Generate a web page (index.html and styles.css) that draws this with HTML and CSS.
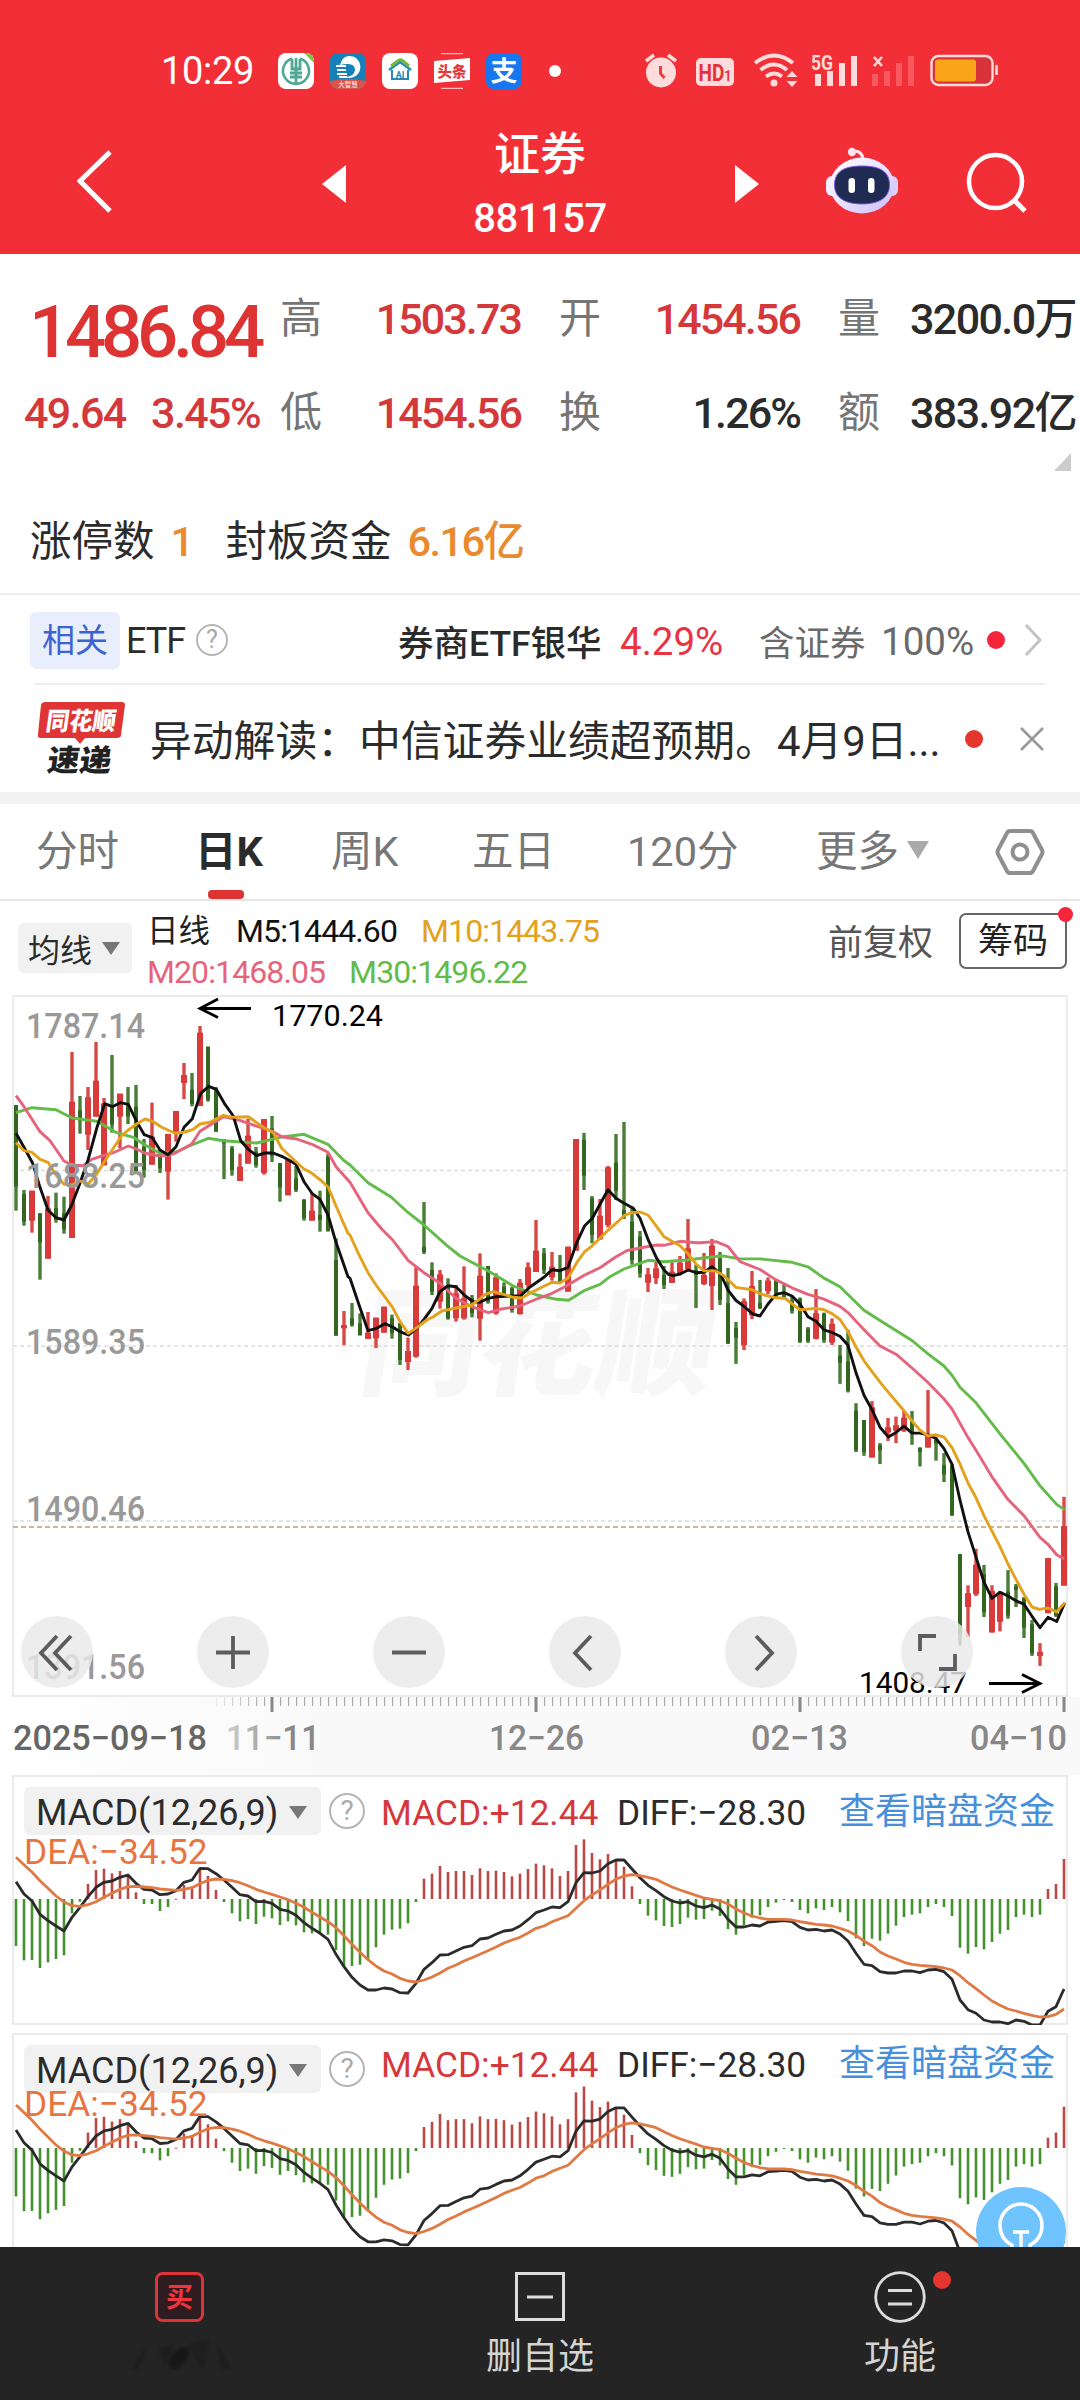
FILE: index.html
```html
<!DOCTYPE html>
<html lang="zh-CN">
<head>
<meta charset="utf-8">
<title>证券 881157</title>
<link rel="stylesheet" href="styles.css">
</head>
<body>
<div class="screen">
  <header class="header">
    <div class="status">
      <span class="time">10:29</span>
      <div class="apps">
        <svg width="36" height="36" viewBox="0 0 36 36"><rect width="36" height="36" rx="8" fill="#fff"/><path d="M26 0h2a8 8 0 0 1 8 8v2z" fill="#7cc243"/><path d="M14 5.5a13 13 0 1 0 8 0" fill="none" stroke="#4fa893" stroke-width="2.6"/><path d="M18 5v26M14 6v10h8V6M12 20h12M12 24h12M18 16v4" fill="none" stroke="#4fa893" stroke-width="2.8"/></svg>
        <svg width="36" height="36" viewBox="0 0 36 36"><rect width="36" height="36" rx="8" fill="#1581b8"/><path d="M0 28q18-4 36 0a8 8 0 0 1-8 8H8a8 8 0 0 1-8-8z" fill="#d9534a"/><path d="M18 3a11 11 0 1 1-3 21q9 0 10-7 0-6-7-6-5 0-8 1 2-8 8-9z" fill="#fff"/><path d="M6 13h10M7 17h9M7 21h10M9 24h8" stroke="#fff" stroke-width="1.8"/><text x="18" y="34" font-size="6.500" fill="#fff" text-anchor="middle">大智慧</text></svg>
        <svg width="36" height="36" viewBox="0 0 36 36"><rect width="36" height="36" rx="8" fill="#fff"/><path d="M7 17 18 9l11 8" fill="none" stroke="#2789b5" stroke-width="2.6"/><path d="M9 13 17 7q2-1 4 1l6 5" fill="none" stroke="#74b83e" stroke-width="3"/><path d="M10 17v9h16v-9" fill="none" stroke="#2789b5" stroke-width="2"/><text x="18" y="24.500" font-size="9" font-weight="700" fill="#2789b5" text-anchor="middle">AI</text></svg>
        <svg width="36" height="36" viewBox="0 0 36 36"><path d="M0 8 36 5v22L0 30z" fill="#fff"/><path d="M7 .7h22M7 35.300h22" stroke="#f9b9b9" stroke-width="1.300"/><text x="18" y="23.500" font-size="14.500" font-weight="900" fill="#e5383b" text-anchor="middle">头条</text></svg>
        <svg width="36" height="36" viewBox="0 0 36 36"><rect width="36" height="36" rx="8" fill="#1677f0"/><text x="18" y="28" font-size="27" font-weight="700" fill="#fff" text-anchor="middle">支</text></svg>
      </div>
      <i class="more-dot"></i>
      <svg class="sys" width="356" height="36" viewBox="0 0 356 36">
        <g fill="#ffdcdc">
          <circle cx="16" cy="19.500" r="15"/><path d="M1 8 9 2M31 8 23 2" stroke="#ffdcdc" stroke-width="3.500"/><path d="M15.500 13v7.500l4 4.500" fill="none" stroke="#ee3b40" stroke-width="3"/>
          <rect x="51" y="5" width="38" height="28" rx="5"/>
          <circle cx="129" cy="30" r="3.500"/>
          <path d="M147 18l5.500 6h-11zM147 34l5.500-6h-11z"/>
          <rect x="170" y="21" width="6" height="12"/><rect x="182" y="18" width="6" height="15"/><rect x="194" y="10" width="6" height="23"/><rect x="206" y="3" width="6" height="30"/>
        </g>
        <text x="70" y="27.500" font-size="23" font-weight="700" fill="#e53238" text-anchor="middle" textLength="33" lengthAdjust="spacingAndGlyphs">HD<tspan font-size="15">1</tspan></text>
        <path d="M110 10Q129-5 148 10M115.500 17Q129 6 142 17M121 23.500Q129 17.500 137 23.500" fill="none" stroke="#ffdcdc" stroke-width="4"/>
        <text x="166" y="16.500" font-size="19.500" font-weight="700" fill="#ffdcdc" textLength="22" lengthAdjust="spacingAndGlyphs">5G</text>
        <path d="M229 4l8 9M237 4l-8 9" stroke="#ffdcdc" stroke-width="2.600"/>
        <g fill="#f7595f"><rect x="227" y="21" width="6" height="12"/><rect x="239" y="18" width="6" height="15"/><rect x="251" y="10" width="6" height="23"/><rect x="263" y="3" width="6" height="30"/></g>
        <rect x="286.500" y="3" width="61" height="29" rx="7" fill="#d8323a" stroke="#ffdcdc" stroke-width="2.400"/><rect x="290" y="6.500" width="41" height="22" rx="3" fill="#faa41a"/><path d="M351.500 12v10" stroke="#ffdcdc" stroke-width="2.600"/>
      </svg>
    </div>
    <nav class="titlebar">
      <svg class="back" width="36" height="66" viewBox="0 0 36 66"><path d="M33 3 3 32l30 30" fill="none" stroke="#fff" stroke-width="5"/></svg>
      <svg width="24" height="38" viewBox="0 0 24 38"><path d="M24 0v38L0 19z" fill="#fff"/></svg>
      <h1 class="title">证券<small>881157</small></h1>
      <svg width="24" height="38" viewBox="0 0 24 38"><path d="M0 0v38l24-19z" fill="#fff"/></svg>
      <svg class="robot" width="74" height="68" viewBox="0 0 74 68">
        <defs><linearGradient id="shell" x1="0" y1="0" x2="1" y2="1"><stop offset="0" stop-color="#fff"/><stop offset=".5" stop-color="#e9e3ff"/><stop offset="1" stop-color="#c9bdfb"/></linearGradient></defs>
        <rect x="1" y="29" width="12" height="20" rx="6" fill="#f1eeff"/><rect x="61" y="29" width="12" height="20" rx="6" fill="#d8cffc"/>
        <path d="M27 4q10-1 11 8" fill="none" stroke="#ffe9ee" stroke-width="3"/><circle cx="27" cy="5" r="4.200" fill="#ffe3ea"/>
        <ellipse cx="37" cy="38.500" rx="32" ry="28" fill="url(#shell)"/>
        <path d="M37 19c20 0 27.500 7 27.500 19S55 57 37 57 9.500 50 9.500 38 17 19 37 19z" fill="#1f2b52" stroke="#7d5ae0" stroke-width="1"/>
        <rect x="23.500" y="31" width="6.500" height="15" rx="3.200" fill="#fff"/><rect x="43" y="31" width="6.500" height="15" rx="3.200" fill="#fff"/>
      </svg>
      <svg class="search" width="62" height="62" viewBox="0 0 62 62"><circle cx="29.500" cy="29.500" r="26.500" fill="none" stroke="#fff" stroke-width="4.500"/><path d="M47 47l12 12" stroke="#fff" stroke-width="5"/></svg>
    </nav>
  </header>

  <section class="quote">
    <div class="figures">
      <strong class="price">1486.84</strong>
      <span class="change"><b>49.64</b><b>3.45%</b></span>
      <span class="k">高</span><span class="v up">1503.73</span>
      <span class="k">开</span><span class="v up">1454.56</span>
      <span class="k">量</span><span class="v wide">3200.0万</span>
      <span class="k">低</span><span class="v up">1454.56</span>
      <span class="k">换</span><span class="v">1.26%</span>
      <span class="k">额</span><span class="v wide">383.92亿</span>
    </div>
    <i class="corner"></i>
    <p class="limits"><span>涨停数</span><em>1</em><span>封板资金</span><em>6.16亿</em></p>
  </section>

  <section class="etf">
    <span class="badge">相关</span><span class="etf-label">ETF</span>
    <span class="help">?</span>
    <span class="etf-name">券商ETF银华</span><span class="etf-pct">4.29%</span>
    <span class="etf-has">含证券</span><span class="etf-full">100%</span><i class="dot"></i>
    <svg width="22" height="34" viewBox="0 0 22 34"><path d="M3 2l14 15L3 32" fill="none" stroke="#c4c4c4" stroke-width="3"/></svg>
  </section>

  <section class="news">
    <svg width="90" height="76" viewBox="0 0 90 76"><path d="M8 1h77q3 0 3 3l-4 30q0 3-4 3H48l-5 6-5-6H4q-4 0-3-4L4 4q1-3 4-3z" fill="#e03535"/><g font-weight="900" transform="skewX(-8)"><text x="12" y="29" font-size="25" fill="#fff" textLength="70" lengthAdjust="spacingAndGlyphs">同花顺</text><text x="19" y="70" font-size="30" fill="#222" textLength="64" lengthAdjust="spacingAndGlyphs">速递</text></g></svg>
    <p>异动解读：中信证券业绩超预期。4月9日...</p>
    <i class="dot"></i>
    <svg width="26" height="26" viewBox="0 0 26 26"><path d="M2 2l22 22M24 2 2 24" stroke="#999" stroke-width="2.600"/></svg>
  </section>

  <nav class="tabs">
    <span>分时</span><span class="active">日K</span><span>周K</span><span>五日</span><span>120分</span><span class="caret">更多</span>
    <svg width="50" height="48" viewBox="0 0 50 48"><path d="M15 3h20q2 0 3 2l9 17q1 2 0 4l-9 17q-1 2-3 2H15q-2 0-3-2L3 26q-1-2 0-4l9-17q1-2 3-2z" fill="none" stroke="#8f8f8f" stroke-width="4"/><circle cx="25" cy="24" r="7.500" fill="none" stroke="#8f8f8f" stroke-width="4"/></svg>
  </nav>

  <section class="legend">
    <span class="ma-pick">均线<i></i></span>
    <p class="ma"><b>日线</b><span>M5:1444.60</span><span class="m10">M10:1443.75</span><br><span class="m20">M20:1468.05</span><span class="m30">M30:1496.22</span></p>
    <span class="adjust">前复权</span>
    <span class="chips">筹码</span>
  </section>

  <section class="kline">
    <svg id="kline" width="1080" height="780" viewBox="0 995 1080 780"></svg>
    <div class="tools">
      <span><svg width="72" height="72"><path d="M36 20 20 37l16 17M50 20 34 37l16 17"/></svg></span>
      <span><svg width="72" height="72"><path d="M36 20v33M19 36.500h34"/></svg></span>
      <span><svg width="72" height="72"><path d="M19 36.500h34"/></svg></span>
      <span><svg width="72" height="72"><path d="M42 20 26 37l16 17"/></svg></span>
      <span><svg width="72" height="72"><path d="M31 20l16 17-16 17"/></svg></span>
      <span><svg width="72" height="72"><path d="M19 35V20h16M54 38v15H38"/></svg></span>
    </div>
  </section>

  <section class="macd">
    <div class="macd-head"><span class="ind">MACD(12,26,9)<i></i></span><span class="help">?</span><span class="up">MACD:+12.44</span><span class="diff">DIFF:−28.30</span><a>查看暗盘资金</a></div>
    <p class="dea">DEA:−34.52</p>
    <svg class="plot" id="macd1" width="1080" height="250"></svg>
  </section>
  <section class="macd second">
    <div class="macd-head"><span class="ind">MACD(12,26,9)<i></i></span><span class="help">?</span><span class="up">MACD:+12.44</span><span class="diff">DIFF:−28.30</span><a>查看暗盘资金</a></div>
    <p class="dea">DEA:−34.52</p>
    <svg class="plot" id="macd2" width="1080" height="250"></svg>
    <svg class="bulb" width="90" height="90" viewBox="0 0 90 90"><circle cx="45" cy="45" r="45" fill="#6fc3ff"/><path d="M36 66v-8q-12-6-12-20a21 21 0 0 1 42 0q0 14-12 20v8M37 45h16M45 45v22" fill="none" stroke="#fff" stroke-width="3.500"/></svg>
  </section>

  <footer class="bottom">
    <div class="item"><svg width="50" height="52" viewBox="0 0 50 52"><rect x="1.500" y="2.500" width="46" height="47" rx="6" fill="#2e1c20" stroke="#dd3439" stroke-width="3"/><text x="24.500" y="35.500" font-size="27" font-weight="700" fill="#f0343c" text-anchor="middle">买</text></svg>
      <svg class="smudge" width="110" height="40" viewBox="0 0 110 40"><path d="M6 33 22 8l-8 26zM34 12l16-4-10 24zM62 8l22-4-6 30zM92 6l14 26-10 2z" fill="#1e1e1e"/><ellipse cx="54" cy="22" rx="13" ry="7" transform="rotate(-50 54 22)" fill="#171717"/></svg></div>
    <div class="item"><svg width="50" height="52" viewBox="0 0 50 52"><path d="M1.500 2.500h47v46h-47zM12 26h26" fill="none" stroke="#dcdcdc" stroke-width="3"/></svg><span>删自选</span></div>
    <div class="item"><svg width="52" height="52" viewBox="0 0 52 52"><circle cx="26" cy="26" r="24.300" fill="none" stroke="#dcdcdc" stroke-width="2.800"/><path d="M14 19.500h24M14 33h24" stroke="#dcdcdc" stroke-width="3"/></svg><span>功能</span><i class="dot"></i></div>
  </footer>
</div>
<script src="chart.js"></script>
</body>
</html>
```

FILE: styles.css
```css
* { box-sizing: border-box; margin: 0; padding: 0; }
body { background: #fff; font-family: Roboto, "Noto Sans CJK SC", sans-serif; color: #2b2b2b; }
i, em { font-style: normal; }
b { font-weight: inherit; }
.screen { width: 1080px; height: 2400px; overflow: hidden; background: #fff; }
svg { display: block; flex: none; }
.up { color: #d5383b; }
.dot { width: 18px; height: 18px; border-radius: 50%; background: #f5253b; flex: none; }

.header { height: 254px; background: #f22f37; color: #fff; padding-top: 53px; }
.status { display: flex; height: 36px; align-items: center; padding-left: 161px; }
.time { width: 117px; font-size: 38px; letter-spacing: -.3px; }
.apps { display: flex; gap: 16px; }
.more-dot { width: 12px; height: 12px; margin: 0 84px 0 27px; border-radius: 50%; background: #fff; }
.titlebar { display: grid; grid-template-columns: 245px 88px 325px 90px 141px 70px; align-items: center; height: 130px; margin-top: 28px; padding-left: 77px; }
.back { margin-top: -4px; }
.robot { margin-top: -6px; }
.search { margin-top: -2px; }
.title { width: 240px; margin-left: 10px; padding-top: 4px; text-align: center; font-size: 46px; line-height: 66px; font-weight: 500; }
.title small { display: block; font-size: 40px; line-height: 64px; letter-spacing: -.5px; font-weight: 500; }

.quote { height: 339px; padding-top: 26px; }
.figures { display: grid; grid-template-columns: 280px 42px 199px 38px 42px 199px 38px 42px 198px; grid-template-rows: 75px 111px; }
.figures > * { white-space: nowrap; }
.price { grid-area: 1 / 1; padding-left: 29px; font-size: 72.500px; line-height: 105px; font-weight: 500; letter-spacing: -5.200px; color: #de3333; }
.change { grid-area: 2 / 1; display: flex; justify-content: space-between; padding: 0 20px 0 24px; font-size: 43px; letter-spacing: -1.600px; font-weight: 500; color: #d5383b; }
.k { font-size: 42px; line-height: 78px; color: #757575; }
.v { font-size: 43px; line-height: 79px; text-align: right; letter-spacing: -1.900px; font-weight: 500; }
.k:nth-child(3) { grid-area: 1 / 2; } .k:nth-child(5) { grid-area: 1 / 5; } .k:nth-child(7) { grid-area: 1 / 8; }
.v:nth-child(4) { grid-area: 1 / 3; } .v:nth-child(6) { grid-area: 1 / 6; } .v:nth-child(8) { grid-area: 1 / 9; }
.k:nth-child(9) { grid-area: 2 / 2; } .k:nth-child(11) { grid-area: 2 / 5; } .k:nth-child(13) { grid-area: 2 / 8; }
.v:nth-child(10) { grid-area: 2 / 3; } .v:nth-child(12) { grid-area: 2 / 6; } .v:nth-child(14) { grid-area: 2 / 9; }
.figures > .change, .figures > :nth-child(n+9) { line-height: 116px; }
.figures > .wide { text-align: left; padding-left: 30px; letter-spacing: -1.600px; }
.corner { display: block; width: 17px; height: 18px; margin: -13px 0 0 1054px; background: #ccc; clip-path: polygon(100% 0, 100% 100%, 0 100%); }
.limits { display: flex; margin-top: 41px; padding-left: 30px; font-size: 41.500px; line-height: 60px; white-space: nowrap; }
.limits em { color: #ea8a2f; font-weight: 500; margin: 0 33px 0 16px; letter-spacing: -1.600px; }

.etf { display: flex; align-items: center; height: 92px; border-top: 2px solid #eee; padding-left: 30px; font-size: 36px; white-space: nowrap; position: relative; }
.etf::after { content: ""; position: absolute; left: 35px; right: 35px; bottom: 0; height: 2px; background: #eee; }
.badge { width: 90px; height: 57px; line-height: 57px; text-align: center; border-radius: 6px; background: #e8eefc; color: #3c63d2; font-size: 33px; }
.etf-label { width: 69px; padding: 2px 0 0 6px; letter-spacing: -1px; }
.help { width: 32px; height: 32px; flex: none; margin-left: 7px; border: 2.500px solid #b5b5b5; border-radius: 50%; color: #aaa; font-size: 25px; line-height: 28px; text-align: center; }
.etf-name { width: 222px; margin-left: 170px; font-weight: 500; font-size: 35.500px; }
.etf-pct { width: 139px; padding-top: 2px; color: #e93345; font-size: 38.500px; }
.etf-has { width: 122px; color: #6a6a6a; font-size: 35.500px; }
.etf-full { width: 106px; padding-top: 2px; color: #6a6a6a; font-size: 38.500px; }
.etf svg { margin-left: 18px; }

.news { display: flex; align-items: center; height: 107px; padding: 0 35px 0 37px; }
.news p { width: 815px; margin-left: 23px; padding-bottom: 2px; font-size: 41.800px; white-space: nowrap; }
.news .dot { background: #e4352f; margin-right: 36px; }

.tabs { display: grid; grid-template-columns: 159px 136px 141px 155px 189px 179px 50px; align-items: center; height: 109px; padding-left: 36px; border-top: 12px solid #f2f2f2; border-bottom: 2px solid #e6e6e6; font-size: 41.500px; color: #777; line-height: 95px; white-space: nowrap; }
.tabs .active { position: relative; color: #2b2b2b; font-weight: 700; }
.active::after { content: ""; position: absolute; left: 13px; bottom: 0; width: 36px; height: 9px; border-radius: 4px; background: #de3333; }
.caret::after { content: ""; display: inline-block; margin-left: 8px; vertical-align: 7px; border: 11px solid transparent; border-top: 18px solid #aaa; border-bottom: 0; }

.legend { display: flex; height: 94px; padding-left: 18px; white-space: nowrap; }
.ma-pick { display: flex; align-items: center; gap: 10px; width: 114px; height: 50px; margin-top: 22px; padding-left: 10px; border-radius: 6px; background: #f1f1f1; font-size: 32px; }
.ma-pick i, .ind i { border: 9px solid transparent; border-top: 13px solid #777; border-bottom: 0; }
.ma { width: 696px; padding: 10px 0 0 15px; font-size: 32px; line-height: 41px; letter-spacing: -.9px; color: #111; }
.ma b { margin-right: 26px; letter-spacing: 0; color: #222; font-size: 31.500px; }
.ma span { margin-right: 24px; }
.m10 { color: #e3a11c; } .m20 { color: #e5647c; } .m30 { color: #63bb4a; }
.adjust { width: 131px; line-height: 86px; font-size: 35px; color: #555; }
.chips { position: relative; width: 108px; height: 56px; margin-top: 12px; border: 2px solid #666; border-radius: 7px; text-align: center; font-size: 35px; line-height: 54px; color: #222; }
.chips::after { content: ""; position: absolute; right: -8px; top: -8px; width: 15px; height: 15px; border-radius: 50%; background: #f5253b; }

.kline { position: relative; height: 780px; }
.tools { position: absolute; left: 21px; top: 621px; display: flex; gap: 104px; }
.tools span { width: 72px; height: 72px; border-radius: 50%; background: rgba(233, 233, 233, .82); }
.tools path { fill: none; stroke: #5c5c5c; stroke-width: 3.800; }

.macd { position: relative; height: 251px; font-size: 35.300px; white-space: nowrap; }
.macd-head { position: relative; z-index: 1; display: flex; height: 72px; padding: 12px 0 0 24px; line-height: 52px; }
.ind { display: flex; align-items: center; justify-content: space-between; width: 297px; height: 48px; padding: 3px 14px 0 12px; border-radius: 6px; background: #f1f1f1; font-size: 36px; }
.macd .help { width: 36px; height: 36px; margin: 6px 0 0 8px; line-height: 32px; font-size: 28px; }
.macd .up { margin-left: 16px; width: 236px; }
.diff { width: 222px; }
.macd a { color: #478fdb; font-size: 36px; line-height: 50px; }
.dea { position: relative; z-index: 1; margin: -15px 0 0 24px; line-height: 40px; color: #e8743f; }
.plot { position: absolute; left: 0; top: 0; }
.second { height: 214px; margin-top: 7px; overflow: hidden; }
.second .macd-head > :not(.ind):not(.help) { margin-top: -6px; }
.second .dea { margin-top: -21px; }
.bulb { position: absolute; z-index: 2; left: 976px; top: 154px; }

.bottom { display: grid; grid-template-columns: repeat(3, 360px); height: 153px; background: #242424; color: #d4d4d4; }
.item { position: relative; display: flex; flex-direction: column; align-items: center; padding-top: 24px; font-size: 36px; line-height: 52px; }
.item span { margin-top: 8px; }
.item .dot { position: absolute; left: 213px; top: 24px; background: #e4352f; }
.smudge { margin-top: 13px; filter: blur(1.500px); }
```

FILE: chart.js
```js
// Rows are grouped in blocks; every block has its own origin and unit.
// Candle: [direction, high, body top, body bottom, low]
const candleBlocks = [
  { y: 990, k: 3, rows: `g345,345,590,662 g600,612,695,707 r602,602,692,728 g670,670,757,869 r618,655,806,806 g608,655,690,698 g620,670,718,731 r186,335,744,744 g318,362,392,431 r291,322,434,480 r156,272,380,380 r324,340,526,526 g195,345,404,428 r311,311,380,475 g291,345,380,402 g285,350,545,550 g447,470,540,563 r338,440,524,524 g480,487,535,549 r432,432,545,629 r363,363,432,455 r219,255,279,327 g249,299,342,349 r108,128,348,348 g170,170,330,335 g291,300,425,425 g447,450,460,567 g468,475,540,557 r491,530,573,573 r387,437,521,521 g471,485,525,533 r387,387,549,554 g378,415,498,516 g519,519,592,635 r510,510,616,616 g528,565,600,606 g627,630,685,692 r610,662,692,692 g602,675,690,725 g490,500,722,725 g745,810,1037,1037 r963,1005,1015,1065 g939,985,1005,1010` },
  { y: 1040, k: 3, rows: `g820,850,885,887 r816,878,897,897 r833,833,895,924 r800,800,878,878 g824,835,880,896 g850,850,960,975 r893,933,966,990 r682,737,950,953 g486,620,636,642 g667,690,755,765 r690,703,785,806 g715,735,835,839 r735,760,835,845 r679,775,835,839 g765,775,820,832 r640,707,836,902 g678,678,785,791 r700,712,820,824 g727,740,762,768 g740,745,810,818 r717,728,822,824 r667,682,735,745 r540,632,696,696 g624,640,690,702 r636,680,712,722 g645,690,725,730 r620,620,755,755 r297,297,632,632 g279,300,407,450 g468,475,585,610 r477,527,597,600 r378,382,555,562 g282,368,452,480 g246,510,530,537 g500,545,660,674 g573,590,700,713 r684,703,728,756 r665,685,715,732 g678,705,735,747 r667,695,729,729 r648,668,700,706 r537,625,688,695 g675,690,705,804 r639,705,732,735 r597,617,738,810 g636,655,780,795 g684,790,910,912` },
  { y: 1180, k: 2.904, rows: `g412,430,458,534 r344,352,480,494 r264,308,393,404 g290,357,372,375 r283,292,323,332 g287,290,328,340 g300,328,340,343 g338,350,380,388 g341,345,470,473 g427,432,468,473 r317,387,461,463 g385,388,465,473 r402,418,472,479 g479,510,530,592 g435,527,612,617 g648,670,785,790 g697,697,790,801 r642,660,806,806 g764,770,785,825 r691,718,733,758 r687,712,728,764 r670,690,728,732 g671,700,735,769 g776,778,790,832 r610,740,777,777 g748,755,765,815 g793,828,855,877 g825,830,973,976 g1086,1086,1320,1352 r1177,1200,1240,1327 r1071,1117,1203,1208 g1118,1145,1255,1269 r1177,1193,1314,1314 r1195,1200,1283,1311 g1133,1195,1265,1274 g1173,1180,1190,1240 g1211,1215,1300,1330 g1278,1290,1375,1382 r1345,1370,1382,1411 r1098,1098,1258,1258 g1170,1180,1265,1269 r920,1005,1178,1178` }
];
const origins = [[0, 990, 3], [350, 1040, 3], [700, 1180, 2.904]];
const averages = {
  '#63bb4a': [
    '48,368 96,353 168,359 216,384 290,394 350,428 400,442 435,465 480,490 530,485 575,465 625,445 670,452 770,459 840,442 912,433 984,463 1030,510',
    '0,375 54,428 122,470 175,518 222,555 290,616 330,648 415,693 490,738 560,765 620,778 656,781 704,751 750,733 780,710 822,687 894,661 942,665 1010,660 1110,648',
    '72,221 120,229 180,229 276,239 324,252 372,285 420,310 492,378 540,408 588,437 636,466 684,505 732,540 756,567 780,602 828,647 900,737 972,823 1020,888 1070,942 1094,958'],
  '#e5647c': [
    '48,317 72,350 96,388 120,425 150,452 192,513 216,525 250,527 275,508 300,500 340,488 385,468 410,477 435,490 480,498 510,495 530,487 575,462 600,424 670,380 720,391 745,400 820,425 845,440 890,447 936,463 984,487 1008,530',
    '0,427 54,518 95,567 128,600 175,662 222,698 270,730 318,775 365,800 415,818 450,808 510,798 560,777 606,760 645,740 700,707 750,683 798,650 830,632 870,624 920,615 942,616 990,604 1038,608',
    '0,182 48,179 84,193 120,237 180,260 228,290 276,313 324,332 372,346 420,367 444,385 492,435 540,482 588,506 636,546 684,588 732,636 756,665 804,748 828,785 876,862 924,928 972,975 1020,1038 1044,1058 1070,1088 1092,1101'],
  '#111': [
    '48,430 72,472 98,520 120,592 144,660 168,683 192,690 215,645 240,580 264,510 290,415 314,341 337,350 361,338 385,343 410,395 433,434 457,443 480,480 504,494 528,470 552,412 577,386 602,310 626,289 649,298 673,340 700,378 722,452 745,478 770,497 795,489 820,489 845,499 865,509 888,523 912,575 936,610 960,628 984,675 1008,757 1044,860',
    '0,715 30,803 54,872 80,865 104,851 128,861 150,875 175,885 200,865 222,838 246,805 270,755 294,737 318,740 345,767 370,785 390,787 415,775 440,770 490,768 512,767 540,741 583,711 606,689 630,692 654,682 680,608 704,557 727,535 774,449 798,475 822,490 850,505 870,535 894,598 920,655 942,690 955,703 970,707 990,702 1015,690 1038,698 1062,697 1086,680 1110,700 1125,730',
    '84,320 108,350 132,367 158,389 180,395 204,360 228,332 252,327 276,337 300,360 324,397 348,410 372,435 396,443 420,454 444,480 468,560 492,625 516,667 540,718 565,746 588,733 612,715 636,735 660,735 684,740 708,750 732,780 756,825 780,930 804,1022 828,1095 852,1168 876,1215 900,1197 924,1208 948,1222 972,1232 996,1267 1020,1300 1044,1270 1070,1282 1094,1228'],
  '#e3a11c': [
    '48,458 72,482 96,487 120,508 144,517 168,555 192,583 216,585 240,573 265,582 290,552 315,512 340,475 365,437 385,420 410,402 435,387 460,395 485,412 525,430 555,426 580,418 600,402 630,397 670,376 700,382 745,380 790,412 820,428 845,475 880,508 912,537 936,550 965,573 985,592 1008,648 1044,730',
    '0,585 25,640 54,698 80,738 104,770 128,803 150,845 175,880 200,863 230,840 250,830 275,813 318,804 365,795 385,780 405,763 430,755 460,763 490,772 515,774 545,757 606,727 630,729 654,714 680,668 704,635 726,618 774,571 800,548 822,527 845,518 870,516 894,525 920,560 942,590 990,617 1015,642 1038,672',
    '12,264 48,264 72,278 108,312 156,319 180,330 204,337 228,342 256,344 300,377 348,373 372,377 396,388 420,405 444,440 468,485 492,525 540,587 564,615 612,670 636,700 660,727 684,743 708,740 732,747 756,777 780,825 804,880 828,923 852,975 900,1065 924,1115 948,1160 972,1203 996,1240 1018,1247 1044,1243 1070,1254 1094,1228']
};
const histogram = [528,571,570,594,577,567,556,430,395,342,300,296,310,303,316,367,402,402,423,411,386,345,350,300,318,360,396,430,454,447,462,440,445,465,454,466,487,490,488,494,540,588,588,584,568,532,494,479,476,460,396,326,311,288,306,303,303,315,295,303,302,306,319,311,297,281,286,295,318,303,225,208,249,268,252,268,290,349,402,437,451,468,471,462,443,449,447,422,438,477,494,466,443,436,411,398,389,396,420,430,415,420,411,427,453,505,528,506,512,491,467,441,434,430,411,402,411,438,533,551,531,538,516,491,480,441,434,441,434,357,342,267];
const diff = [335,372,393,433,452,468,483,442,412,380,352,337,333,322,315,340,358,360,374,372,362,337,330,295,296,311,330,352,374,378,395,394,400,418,423,436,458,475,490,508,553,590,622,645,660,660,654,657,668,669,640,598,578,555,554,543,532,527,507,504,493,483,480,468,449,428,420,411,413,395,338,308,309,303,281,270,270,297,323,346,362,380,393,399,395,408,413,405,417,448,471,471,465,468,456,454,452,455,472,480,478,483,480,492,513,550,583,587,605,609,609,603,603,608,600,598,605,628,690,719,730,750,756,756,761,750,754,765,765,724,710,657];
const dea = [262,284,306,332,355,378,396,407,409,404,395,382,370,358,350,349,351,353,357,359,361,358,353,341,331,327,328,332,338,347,358,366,373,381,389,400,412,427,441,455,473,497,523,547,569,588,603,612,625,633,636,630,621,609,595,585,573,563,553,542,531,519,510,502,489,475,468,455,446,437,415,392,375,360,343,328,318,314,317,322,328,340,351,360,368,376,384,388,392,402,417,429,438,444,448,448,448,450,455,459,463,465,468,475,483,496,513,527,546,558,567,577,583,586,588,590,594,600,617,638,656,675,693,706,717,723,730,736,741,740,733,717];

const X = i => 16 + i * 8;
const rect = (x, y, w, h, fill) => `<rect x="${x}" y="${y}" width="${w}" height="${h}" fill="${fill}"/>`;
const line = (d, stroke, width, extra = '') => `<path d="${d}" fill="none" stroke="${stroke}" stroke-width="${width}" ${extra}/>`;
const label = (x, y, size, length, fill, text, extra = '') =>
  `<text x="${x}" y="${y}" font-size="${size}" fill="${fill}" textLength="${length}" lengthAdjust="spacingAndGlyphs" ${extra}>${text}</text>`;

function drawKline() {
  let s = `<defs><linearGradient id="fade"><stop offset="0" stop-color="#fff"/><stop offset=".3" stop-color="#f9f9f9"/></linearGradient></defs>
    <rect x="0" y="1697" width="1080" height="78" fill="url(#fade)"/>`;
  s += rect(13, 996, 1053, 700, '#fff');
  s += `<g transform="translate(348 1386) skewX(-9)" font-weight="900">${label(8, 0, 118, 354, '#f7f7f7', '同花顺')}</g>`;
  for (const y of [1170.5, 1346, 1521]) s += line(`M13 ${y}H1066`, '#dcdcdc', 1.3, 'stroke-dasharray="4 3"');
  s += line('M13 996H1067V1696H13Z', '#ebebeb', 2);
  s += line('M13 1527H1066', '#bd9f6c', 1.7, 'stroke-dasharray="5 3"');
  let i = 0;
  for (const block of candleBlocks) for (const row of block.rows.split(' ')) {
    const [high, top, bottom, low] = row.slice(1).split(',').map(v => block.y + v / block.k);
    const x = X(i++), red = row[0] === 'r', color = red ? '#d93a3a' : '#33661f', w = red ? 6 : 4;
    s += rect(x - 1.7, high, 3.4, low - high, red ? '#d84a48' : '#4a7d38') + rect(x - w / 2, top, w, Math.max(3, bottom - top), color);
  }
  for (const [color, parts] of Object.entries(averages)) {
    const pts = parts.map((part, n) => part.split(' ').map(p => {
      const [px, py] = p.split(',').map(Number), [ox, oy, k] = origins[n];
      return (ox + px / 3).toFixed(1) + ' ' + (oy + py / k).toFixed(1);
    }).join('L')).join('L');
    s += line('M' + pts, color, 2.9, 'stroke-linejoin="round"');
  }
  [['1787.14', 1038], ['1688.25', 1188], ['1589.35', 1354], ['1490.46', 1521], ['1391.56', 1679]]
    .forEach(([t, y]) => { s += label(26, y, 34.5, 119, '#999', t, 'font-weight="500"'); });
  s += label(272, 1026, 29, 111, '#000', '1770.24') + line('M251 1008.500H200M218 999L200 1008.500L218 1017.500', '#000', 2.8);
  s += label(859, 1693, 29, 108, '#000', '1408.47') + line('M989 1683.500H1040M1022 1674.500L1040 1683.500L1022 1692.500', '#000', 2.8);
  for (let x = 216; x <= 1064; x += 8) {
    const major = (x - 272) % 264 === 0;
    s += major ? rect(x - 1.5, 1697, 3, 15, '#888') : `<rect x="${x}" y="1697" width="1.200" height="9" fill="#aaa" opacity="${Math.min(1, (x - 205) / 60)}"/>`;
  }
  s += '<linearGradient id="soft" x1="228" x2="290" gradientUnits="userSpaceOnUse"><stop stop-color="#ccc"/><stop offset="1" stop-color="#888"/></linearGradient>';
  [['2025−09−18', 13, 194, '#666'], ['11−11', 226, 94, 'url(#soft)'], ['12−26', 489, 95, '#888'], ['02−13', 751, 97, '#888'], ['04−10', 970, 97, '#888']]
    .forEach(([t, x, w, c]) => { s += label(x, 1750, 34.5, w, c, t, 'font-weight="500"'); });
  document.getElementById('kline').innerHTML = s;
}

function drawMacd(id, zero, k, height) {
  const at = v => zero + (v - 387) / 3 * k;
  let s = line(`M13 1H1067V${height}H13Z`, '#ebebeb', 2) + line(`M13 ${zero + 3}H1066`, '#eedfe4', 1, 'stroke-dasharray="2 3"');
  histogram.forEach((v, i) => {
    const y = at(v), h = Math.max(1, Math.abs(y - zero));
    s += rect(X(i) - 1.3, Math.min(y, zero), 2.6, h, v < 387 ? '#b94a45' : '#46912f');
  });
  for (const [values, color] of [[diff, '#2b2b2b'], [dea, '#e07a45']])
    s += line('M' + values.map((v, i) => X(i) + ' ' + at(v).toFixed(1)).join('L'), color, 2.8, 'stroke-linejoin="round"');
  document.getElementById(id).innerHTML = s;
}

drawKline();
drawMacd('macd1', 124, 1, 249);
drawMacd('macd2', 115, 1.031, 300);
```
